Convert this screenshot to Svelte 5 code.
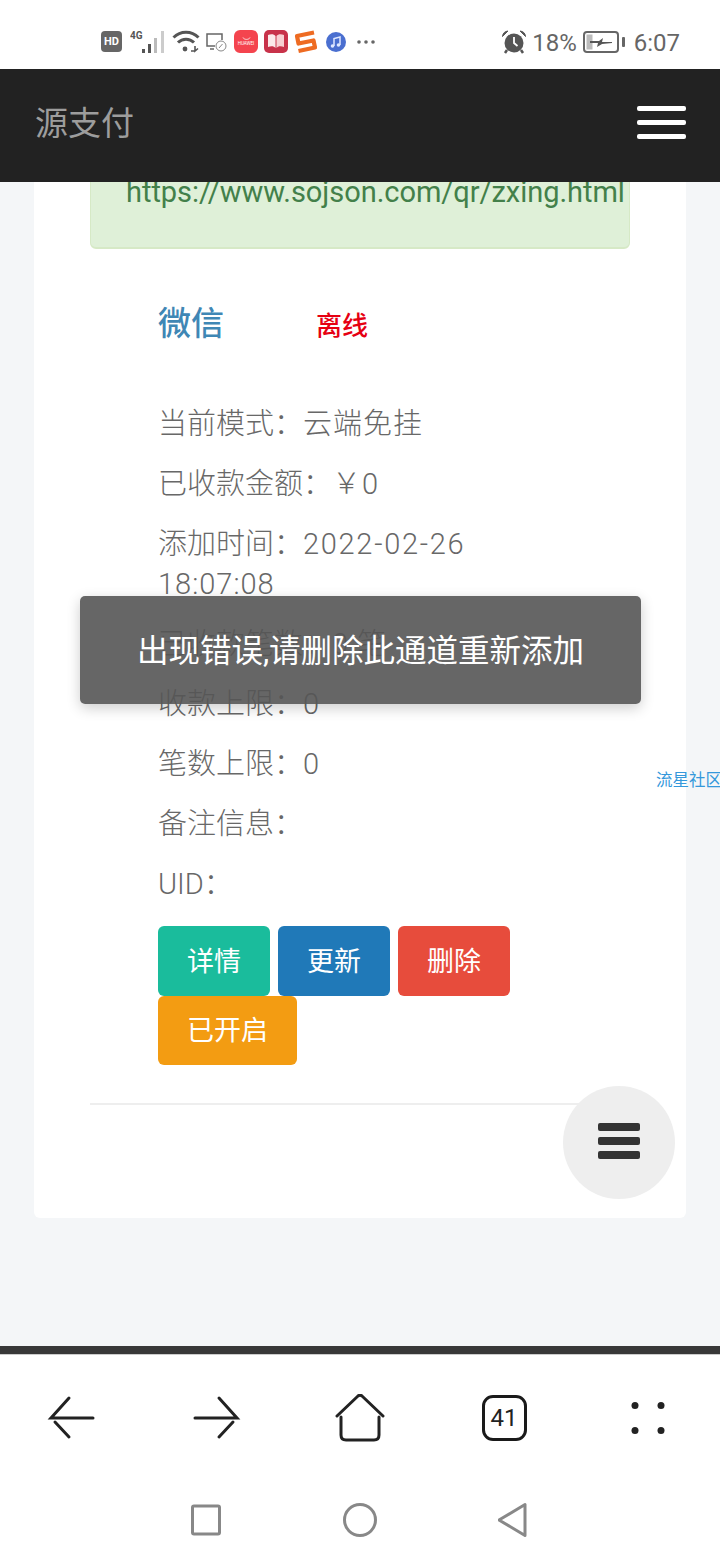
<script>
  const rows = [
    { label: "当前模式：", value: "云端免挂" },
    { label: "已收款金额：", value: "￥0" },
    { label: "添加时间：", date: "2022-02-26", value: " 18:07:08" },
    { label: "已收款笔数：", value: "0 笔" },
    { label: "收款上限：", value: "0" },
    { label: "笔数上限：", value: "0" },
    { label: "备注信息：", value: "" },
    { label: "UID：", value: "" },
  ];

  const buttons = [
    { text: "详情", kind: "info" },
    { text: "更新", kind: "primary" },
    { text: "删除", kind: "danger" },
    { text: "已开启", kind: "warning" },
  ];
</script>

<div class="phone">
  <header class="status">
    <div class="status-left">
      <span class="hd">HD</span>
      <svg class="signal" width="36" height="26" viewBox="0 0 36 26">
        <text x="0" y="9" class="net">4G</text>
        <rect x="12" y="19" width="3" height="4" fill="#555" />
        <rect x="18" y="14" width="3" height="9" fill="#555" />
        <rect x="24" y="8" width="3" height="15" fill="#bbb" />
        <rect x="31" y="1" width="3" height="22" fill="#ccc" />
      </svg>
      <svg class="wifi" width="28" height="24" viewBox="0 0 28 24" fill="none" stroke="#555" stroke-width="3">
        <path d="M1.500 8.500C8.500 1.500 19.500 1.500 26.500 8.500" />
        <path d="M6 13.500C10.500 9 17.500 9 22 13.500" />
        <circle cx="13" cy="20" r="2.400" fill="#555" stroke="none" />
        <path d="M19 22h4M23 17v5l3-2.500" stroke-width="1.600" />
      </svg>
      <svg class="cast" width="21" height="20" viewBox="0 0 21 20" fill="none" stroke="#666" stroke-width="1.500">
        <path d="M9 14H1V2h15v6" />
        <path d="M4 17h4" />
        <circle cx="15" cy="14" r="5" stroke="#888" stroke-width="1" />
        <path d="M13 16l3.500-4" stroke="#888" stroke-width="1" />
      </svg>
      <span class="app huawei">
        <svg width="9" height="4" viewBox="0 0 9 4" fill="none" stroke="#fff" stroke-width="0.800">
          <path d="M1 0.500C2 3 7 3 8 0.500" />
        </svg>
        HUAWEI
      </span>
      <svg class="book" width="24" height="23" viewBox="0 0 24 23">
        <rect width="24" height="23" rx="5" fill="#c8324a" />
        <path d="M4 5c3-1 6-1 7.500 1v12C10 16 7 16 4 17z" fill="#fbe9ea" />
        <path d="M20 5c-3-1-6-1-7.500 1v12c1.500-2 4.500-2 7.500-1z" fill="#f7cfd2" />
      </svg>
      <svg class="sogou" width="26" height="26" viewBox="0 0 26 26" fill="none" stroke="#ee6b22" stroke-width="4.200" stroke-linejoin="round">
        <path d="M21 3.500L4 7L5.500 14.500L20.500 11.500L22 18.500L5.500 22" />
      </svg>
      <svg class="music" width="20" height="20" viewBox="0 0 20 20">
        <circle cx="10" cy="10" r="10" fill="#4a6fd0" />
        <path d="M8 14V6.500l6-1.500v8" fill="none" stroke="#dfe8ff" stroke-width="1.500" />
        <circle cx="6.500" cy="14" r="1.800" fill="#dfe8ff" />
        <circle cx="12.500" cy="13" r="1.800" fill="#dfe8ff" />
      </svg>
      <svg class="more" width="18" height="6" viewBox="0 0 18 6" fill="#666">
        <circle cx="2" cy="3" r="1.800" />
        <circle cx="9" cy="3" r="1.800" />
        <circle cx="16" cy="3" r="1.800" />
      </svg>
    </div>
    <div class="status-right">
      <svg class="alarm" width="24" height="24" viewBox="0 0 24 24">
        <circle cx="12" cy="13" r="9.500" fill="#555" />
        <path d="M0.500 6.500Q1 1.500 6 1zM23.500 6.500Q23 1.500 18 1z" fill="#555" stroke="#555" stroke-width="1" />
        <path d="M5 20l-2 3M19 20l2 3" stroke="#555" stroke-width="2.500" />
        <path d="M12 7V13l3.500 3" fill="none" stroke="#fff" stroke-width="1.800" />
      </svg>
      <span class="pct">18%</span>
      <svg class="battery" width="42" height="22" viewBox="0 0 42 22">
        <rect x="1" y="1" width="34" height="20" rx="3" fill="none" stroke="#666" stroke-width="2" />
        <rect x="3.500" y="3.500" width="6" height="15" fill="#bbb" />
        <path d="M7 10h9l4-3-1 4h10v1l-10 1-5 3 1-4H7z" fill="#555" />
        <rect x="39" y="6" width="3" height="10" rx="1" fill="#666" />
      </svg>
      <span class="clock">6:07</span>
    </div>
  </header>

  <nav class="navbar">
    <span class="brand">源支付</span>
    <button class="toggle" aria-label="菜单">
      <span></span>
      <span></span>
      <span></span>
    </button>
  </nav>

  <main class="content">
    <section class="card">
      <div class="alert">https://www.sojson.com/qr/zxing.html</div>

      <div class="channel">
        <div class="title">
          <h3>微信</h3>
          <span class="offline">离线</span>
        </div>

        {#each rows as row}
          <p>{row.label}{#if row.date}<span class="date">{row.date}</span>{/if}<span class="value">{row.value}</span></p>
        {/each}

        <div class="actions">
          {#each buttons as btn}
            <button class="btn {btn.kind}">{btn.text}</button>
          {/each}
        </div>
      </div>

      <hr />
    </section>

    <div class="toast">出现错误,请删除此通道重新添加</div>
    <a class="side-link" href="#top">流星社区</a>
    <button class="fab" aria-label="更多">
      <span></span>
      <span></span>
      <span></span>
    </button>
  </main>

  <div class="divider"></div>

  <div class="toolbar">
    <svg width="50" height="46" viewBox="0 0 50 46" fill="none" stroke="#222" stroke-width="3" stroke-linecap="round">
      <path d="M22 3L4 23H46" />
      <path d="M8 27L22 42" />
    </svg>
    <svg width="50" height="46" viewBox="0 0 50 46" fill="none" stroke="#222" stroke-width="3" stroke-linecap="round">
      <path d="M28 3L46 23H4" />
      <path d="M42 27L28 42" />
    </svg>
    <svg width="50" height="48" viewBox="0 0 50 48" fill="none" stroke="#222" stroke-width="3" stroke-linecap="round" stroke-linejoin="round">
      <path d="M2 22L23 2Q25 0.500 27 2L48 22" />
      <path d="M6 23V41Q6 46 11 46H39Q44 46 44 41V23" />
    </svg>
    <span class="tabs">41</span>
    <svg width="34" height="34" viewBox="0 0 34 34" fill="#222">
      <circle cx="4" cy="4.500" r="3.500" />
      <circle cx="30" cy="4.500" r="3.500" />
      <circle cx="4" cy="29.500" r="3.500" />
      <circle cx="30" cy="29.500" r="3.500" />
    </svg>
  </div>

  <div class="softkeys">
    <svg width="32" height="32" viewBox="0 0 32 32" fill="none" stroke="#888" stroke-width="3" stroke-linejoin="round">
      <rect x="2.500" y="2" width="27" height="28" rx="1.500" />
    </svg>
    <svg width="34" height="34" viewBox="0 0 34 34" fill="none" stroke="#888" stroke-width="3">
      <circle cx="17" cy="17" r="15.500" />
    </svg>
    <svg width="32" height="36" viewBox="0 0 32 36" fill="none" stroke="#888" stroke-width="3" stroke-linejoin="round">
      <path d="M27 2.500V33.500L1 18Z" />
    </svg>
  </div>
</div>

<style>
  :global(body) {
    margin: 0;
    background: #fff;
  }

  .phone {
    width: 720px;
    height: 1560px;
    overflow: hidden;
    display: flex;
    flex-direction: column;
    font-family: Roboto, "Noto Sans CJK SC", sans-serif;
    font-weight: 300;
  }

  /* system status bar */
  .status {
    height: 69px;
    flex: none;
    background: #fff;
    display: flex;
    justify-content: space-between;
    align-items: center;
    padding: 14px 40px 0 101px;
    box-sizing: border-box;
    color: #666;
  }

  .status-left,
  .status-right {
    display: flex;
    align-items: center;
  }

  .hd {
    width: 21px;
    height: 21px;
    border-radius: 4px;
    background: #666;
    color: #fff;
    font: bold 11px Roboto, sans-serif;
    display: flex;
    align-items: center;
    justify-content: center;
  }

  .net {
    font: bold 10px Roboto, sans-serif;
    fill: #555;
  }

  .signal {
    margin-left: 8px;
    margin-top: 2px;
  }

  .wifi {
    margin-left: 6px;
    margin-top: -2px;
  }

  .cast {
    margin-left: 6px;
  }

  .app {
    margin-left: 7px;
  }

  .huawei {
    width: 24px;
    height: 23px;
    border-radius: 6px;
    background: #f4444e;
    color: #fff;
    font: 4.500px/6px Roboto, sans-serif;
    display: flex;
    flex-direction: column;
    align-items: center;
    justify-content: center;
    overflow: hidden;
  }

  .book {
    margin-left: 6px;
  }

  .sogou {
    margin-left: 5px;
  }

  .music {
    margin-left: 7px;
  }

  .more {
    margin-left: 11px;
  }

  .status-right {
    gap: 7px;
  }

  .alarm {
    margin-right: -1px;
  }

  .pct,
  .clock {
    font-size: 24px;
    font-weight: 400;
    color: #666;
    margin-top: 3px;
  }

  .pct {
    margin-right: -1px;
  }

  .clock {
    margin-left: 2px;
  }

  /* site header */
  .navbar {
    height: 113px;
    flex: none;
    background: #222;
    display: flex;
    align-items: center;
    justify-content: space-between;
    padding: 0 34px 0 35px;
    box-sizing: border-box;
    position: relative;
    z-index: 2;
  }

  .brand {
    font-size: 33px;
    font-weight: 400;
    color: #9d9d9d;
    padding-bottom: 10px;
  }

  .toggle {
    width: 49px;
    padding: 0;
    border: 0;
    background: none;
    display: flex;
    flex-direction: column;
    gap: 9px;
    margin-top: -7px;
  }

  .toggle span {
    height: 5px;
    border-radius: 2px;
    background: #fff;
  }

  /* scrolled page */
  .content {
    height: 1164px;
    flex: none;
    background: #f4f6f8;
    overflow: hidden;
    position: relative;
    padding: 0 34px;
    box-sizing: border-box;
  }

  .card {
    margin-top: -40px;
    height: 1076px;
    padding: 0 56px;
    background: #fff;
    border-radius: 6px;
    box-sizing: border-box;
    overflow: hidden;
  }

  .alert {
    height: 107px;
    padding: 29px 0 0 35px;
    background: #dff0d8;
    border: 1px solid #d6e9c6;
    border-bottom-width: 2px;
    border-radius: 6px;
    box-sizing: border-box;
    color: #43804a;
    font-size: 29px;
    font-weight: 400;
    letter-spacing: -0.030px;
    line-height: 40px;
    white-space: nowrap;
  }

  .channel {
    padding: 52px 68px 0;
    color: #686868;
  }

  .title {
    display: flex;
    align-items: center;
    gap: 92px;
    margin-bottom: 57px;
  }

  .title h3 {
    margin: 0;
    font-size: 33px;
    font-weight: 500;
    line-height: 46px;
    color: #3f87b5;
  }

  .offline {
    font-size: 26px;
    font-weight: 500;
    color: #e60012;
    margin-top: -2px;
  }

  .channel p {
    margin: 0 0 20px;
    font-size: 29px;
    line-height: 40px;
  }

  .date {
    letter-spacing: 1.700px;
  }

  .value {
    letter-spacing: 1px;
  }

  .actions {
    display: flex;
    flex-wrap: wrap;
    column-gap: 8px;
    margin-top: 22px;
  }

  .btn {
    height: 69.500px;
    padding: 0 29px 3px;
    border: 0;
    border-radius: 6px;
    color: #fff;
    font: 400 27px Roboto, "Noto Sans CJK SC", sans-serif;
  }

  .info {
    background: #1abc9c;
  }

  .primary {
    background: #2079b8;
  }

  .danger {
    background: #e74c3c;
  }

  .warning {
    background: #f39c12;
  }

  hr {
    margin: 38px 0 0;
    border: 0;
    border-top: 2px solid #eee;
  }

  /* floating things over the page */
  .toast {
    position: absolute;
    left: 80px;
    top: 414px;
    width: 561px;
    height: 108px;
    padding-bottom: 4px;
    border-radius: 5px;
    box-sizing: border-box;
    background: rgba(85, 85, 85, 0.9);
    box-shadow: 0 4px 14px rgba(0, 0, 0, 0.2);
    color: #fff;
    font-size: 31.500px;
    font-weight: 400;
    display: flex;
    align-items: center;
    justify-content: center;
  }

  .side-link {
    position: absolute;
    left: 656px;
    top: 588px;
    font-size: 16.500px;
    font-weight: 400;
    line-height: 22px;
    color: #3498db;
    text-decoration: none;
    white-space: nowrap;
  }

  .fab {
    position: absolute;
    left: 563px;
    top: 904px;
    width: 112px;
    height: 113px;
    padding: 0 0 3px;
    border: 0;
    border-radius: 50%;
    background: #eee;
    display: flex;
    flex-direction: column;
    align-items: center;
    justify-content: center;
    gap: 6px;
  }

  .fab span {
    width: 42px;
    height: 8px;
    border-radius: 2px;
    background: #333;
  }

  /* browser chrome */
  .divider {
    height: 9px;
    flex: none;
    background: #383838;
    border-bottom: 1px solid #ccc;
    box-sizing: border-box;
  }

  .toolbar {
    height: 125px;
    flex: none;
    display: grid;
    grid-template-columns: repeat(5, 144px);
    justify-items: center;
    align-items: center;
  }

  .tabs {
    width: 45px;
    height: 46px;
    border: 3px solid #1a1a1a;
    border-radius: 11px;
    box-sizing: border-box;
    color: #222;
    font: 400 24px/40px Roboto, sans-serif;
    text-align: center;
  }

  .softkeys {
    height: 80px;
    flex: none;
    display: flex;
    justify-content: center;
    align-items: center;
    gap: 121px;
  }
</style>
